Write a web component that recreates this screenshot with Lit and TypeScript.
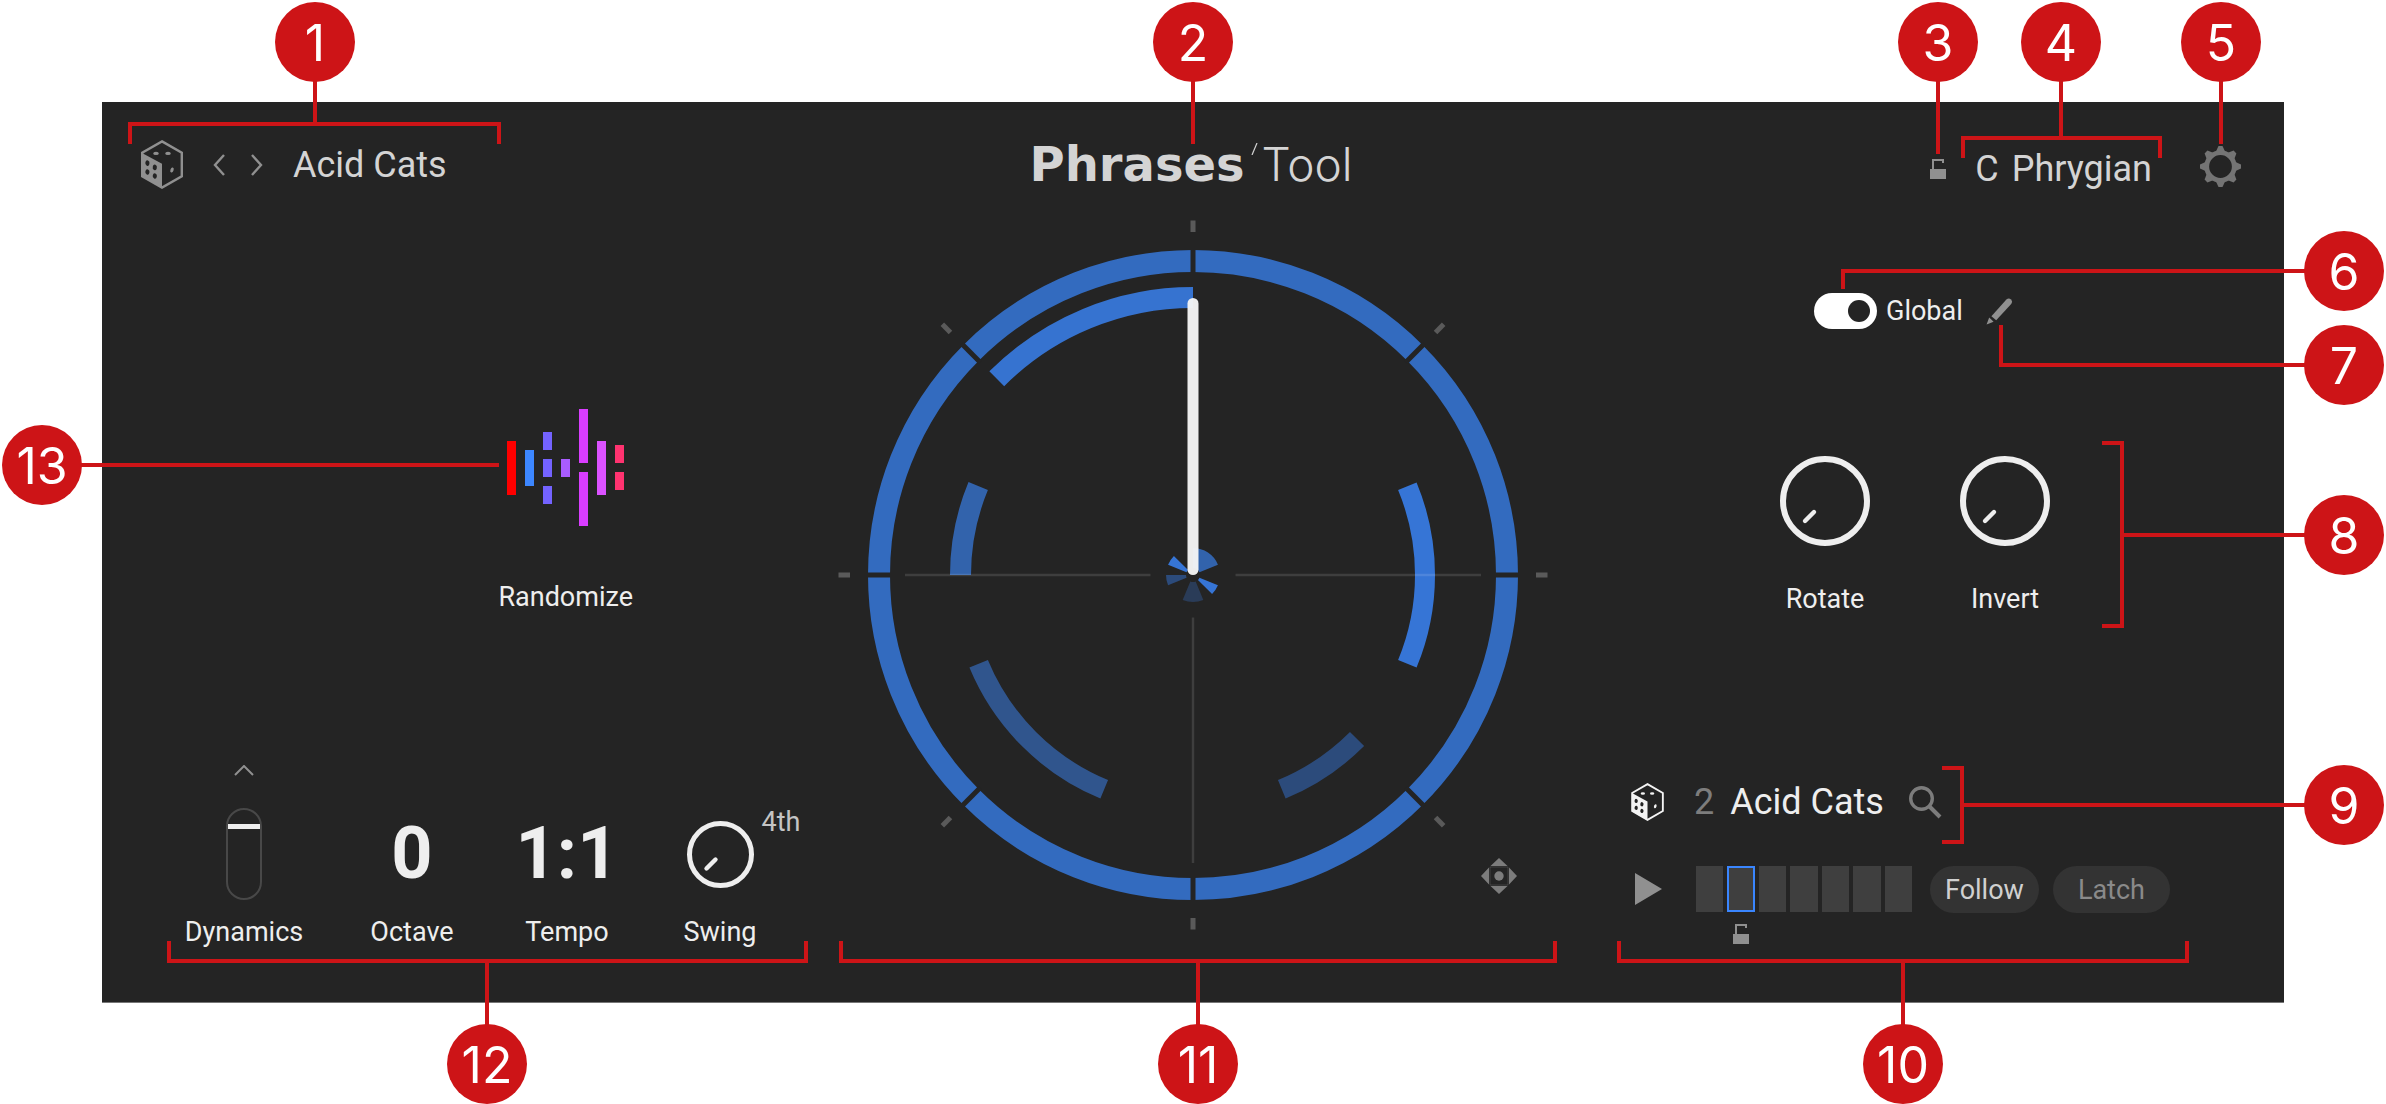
import { LitElement, html, css, svg } from "lit";
import { customElement, property, state } from "lit/decorators.js";
import { classMap } from "lit/directives/class-map.js";

/** Point on a circle; the angle is in degrees, clockwise from twelve o'clock. */
const polar = (angle: number, radius: number): string => {
  const rad = (angle * Math.PI) / 180;
  return `${(Math.sin(rad) * radius).toFixed(2)} ${(-Math.cos(rad) * radius).toFixed(2)}`;
};

/** Ring segment between two angles and two radii. */
const segment = (from: number, to: number, inner: number, outer: number): string =>
  `M${polar(from, outer)}A${outer} ${outer} 0 0 1 ${polar(to, outer)}` +
  `L${polar(to, inner)}A${inner} ${inner} 0 0 0 ${polar(from, inner)}Z`;

const EIGHTHS = [0, 45, 90, 135, 180, 225, 270, 315];

const NOTES = [
  { from: 315, to: 360, inner: 267, outer: 288, color: "#3673d0" },
  { from: 67.5, to: 112.5, inner: 222, outer: 242, color: "#3675d6" },
  { from: 135, to: 157.5, inner: 222, outer: 242, color: "#2c4b7b" },
  { from: 202.5, to: 247.5, inner: 222, outer: 242, color: "#30558d" },
  { from: 270, to: 292.5, inner: 222, outer: 243, color: "#3263ac" },
  { from: 0, to: 67.5, inner: 7, outer: 27, color: "#3263ac" },
  { from: 112.5, to: 135, inner: 7, outer: 27, color: "#3675d6" },
  { from: 157.5, to: 202.5, inner: 7, outer: 27, color: "#2a3c58" },
  { from: 247.5, to: 270, inner: 7, outer: 27, color: "#2c4b7b" },
  { from: 292.5, to: 315, inner: 7, outer: 27, color: "#3675d6" },
];

const RANDOM_BARS: [number, number, number, string][] = [
  [0, 32, 54, "#ff0000"],
  [18, 41, 36, "#3d87ff"],
  [36, 23, 18, "#7463ff"],
  [36, 50, 18, "#7463ff"],
  [36, 77, 18, "#7463ff"],
  [54, 50, 18, "#a95cff"],
  [72, 0, 54, "#d93dff"],
  [72, 63, 54, "#d93dff"],
  [90, 32, 54, "#db52ff"],
  [108, 36, 18, "#ff3370"],
  [108, 63, 18, "#ff3370"],
];

interface Callout {
  n: number;
  x: number;
  y: number;
  line: string;
}

/** Callouts are grouped by the edge of the window that they keep to. */
const LEFT_CALLOUTS: Callout[] = [
  { n: 1, x: 315, y: 42, line: "M315 42V124M130 144V124H499V144" },
  { n: 12, x: 487, y: 1064, line: "M487 1064V961M169 941V961H806V941" },
  { n: 13, x: 42, y: 465, line: "M42 465H499" },
];
const CENTER_CALLOUTS: Callout[] = [
  { n: 2, x: 0, y: 42, line: "M0 42V144" },
  { n: 11, x: 5, y: 1064, line: "M5 1064V961M-352 941V961H362V941" },
];
const RIGHT_CALLOUTS: Callout[] = [
  { n: 3, x: 352, y: 42, line: "M352 42V154" },
  { n: 4, x: 475, y: 42, line: "M475 42V138M377 158V138H574V158" },
  { n: 5, x: 635, y: 42, line: "M635 42V144" },
  { n: 6, x: 758, y: 271, line: "M758 271H257V289" },
  { n: 7, x: 758, y: 365, line: "M758 365H415V325" },
  { n: 8, x: 758, y: 535, line: "M758 535H536M516 443H536V626H516" },
  { n: 9, x: 758, y: 805, line: "M758 805H376M356 768H376V842H356" },
  { n: 10, x: 317, y: 1064, line: "M317 1064V961M33 941V961H601V941" },
];

const diceIcon = (width: number, height: number) => html`
  <svg width=${width} height=${height} viewBox="0 0 42 49" aria-hidden="true">
    <path
      d="M21 1.4L40.8 12.8V36.2L21 47.6L1.2 36.2V12.8Z"
      fill="none" stroke="currentColor" stroke-width="2.4"
    />
    <path
      fill="currentColor" fill-rule="evenodd"
      d="M1 13L21 23.8V48L1 36.5Z
         M4.4 22.3a2 2.6 0 1 0 4 1.6a2 2.6 0 1 0 -4 -1.6Z
         M11.8 26.6a2 2.6 0 1 0 4 1.6a2 2.6 0 1 0 -4 -1.6Z
         M4.4 31.2a2 2.6 0 1 0 4 1.6a2 2.6 0 1 0 -4 -1.6Z
         M11.8 35.2a2 2.6 0 1 0 4 1.6a2 2.6 0 1 0 -4 -1.6Z"
    />
    <g fill="currentColor">
      <ellipse cx="15" cy="13.4" rx="2.8" ry="1.6" />
      <ellipse cx="27" cy="13.4" rx="2.8" ry="1.6" />
      <ellipse cx="31" cy="30" rx="1.6" ry="2.6" transform="rotate(20 31 30)" />
    </g>
  </svg>
`;

const lockIcon = () => html`
  <svg width="16" height="20" viewBox="0 0 16 20" aria-hidden="true">
    <path d="M3 11V1H13V4" fill="none" stroke="currentColor" stroke-width="2" />
    <rect y="10" width="16" height="10" fill="currentColor" />
  </svg>
`;

@customElement("knob-control")
export class KnobControl extends LitElement {
  @property() label = "";
  @property({ type: Number }) size = 90;
  @property({ type: Number }) value = 0;

  static styles = css`
    :host {
      display: block;
      position: relative;
    }
    svg {
      display: block;
    }
    .range {
      position: absolute;
      inset: 0;
      width: 100%;
      height: 100%;
      margin: 0;
      opacity: 0;
      cursor: pointer;
    }
  `;

  render() {
    const s = this.size;
    const big = s > 80;
    const stroke = big ? 6 : 5;
    const near = big ? 11 : 5;
    const far = big ? 20 : 14;
    return html`
      <svg width=${s} height=${s} viewBox="${-s / 2} ${-s / 2} ${s} ${s}" aria-hidden="true">
        <circle r=${(s - stroke) / 2} fill="none" stroke="#eee" stroke-width=${stroke} />
        <path
          d="M${-near} ${near}L${-far} ${far}"
          transform="rotate(${this.value * 2.7})"
          stroke="#eee" stroke-width="4.4" stroke-linecap="round"
        />
      </svg>
      <input
        class="range" type="range" min="0" max="100" aria-label=${this.label}
        .value=${String(this.value)}
        @input=${(e: Event) => (this.value = Number((e.target as HTMLInputElement).value))}
      />
    `;
  }
}

@customElement("phrase-dial")
export class PhraseDial extends LitElement {
  static styles = css`
    :host {
      display: block;
      position: relative;
    }
    .dial {
      display: block;
      width: 100%;
      height: auto;
    }
    .recenter {
      position: absolute;
      right: 36px;
      bottom: 41px;
      padding: 0;
      border: 0;
      background: none;
      line-height: 0;
      cursor: pointer;
    }
  `;

  render() {
    return html`
      <svg class="dial" viewBox="-360 -360 720 720" role="img" aria-label="Phrase">
        <circle r="314" fill="none" stroke="#336bbf" stroke-width="22" />
        ${EIGHTHS.map(
          (a) => svg`
            <g transform="rotate(${a})">
              <rect x="-2.5" y="-327" width="5" height="26" fill="#242424" />
              <rect x="-2.5" y="-354.5" width="5" height="11.5" fill="#5a5a5a" />
            </g>`
        )}
        ${NOTES.map((n) => svg`<path d=${segment(n.from, n.to, n.inner, n.outer)} fill=${n.color} />`)}
        <path
          d="M-288 0H-42.5M42.5 0H288M0 42.5V288"
          stroke="#fff" stroke-opacity="0.12" stroke-width="2.4"
        />
        <rect x="-5.5" y="-277" width="11" height="277" rx="5.5" fill="#f4f4f4" fill-opacity="0.97" />
      </svg>
      <button class="recenter" aria-label="Recenter">
        <svg width="36" height="36" viewBox="-18 -18 36 36" fill="#7c7c7c" aria-hidden="true">
          <path d="M0 -18L8.5 -10H-8.5ZM0 18L8.5 10H-8.5ZM-18 0L-10 -8.5V8.5ZM18 0L10 -8.5V8.5Z" />
          <path
            d="M-9 -9H9V9H-9Z" fill="none" stroke="#7c7c7c" stroke-opacity="0.35" stroke-width="1"
          />
          <circle r="4.7" />
        </svg>
      </button>
    `;
  }
}

@customElement("app-root")
export class AppRoot extends LitElement {
  @state() private cell = 1;
  @state() private global = true;

  static styles = css`
    :host {
      display: block;
      background: #fff;
      font-family: Roboto, "Liberation Sans", sans-serif;
    }
    .frame {
      position: relative;
      padding: 102px 102px 101px;
    }
    .panel {
      box-sizing: border-box;
      padding: 38px 0 54px;
      border-bottom: 1px solid #777;
      background: #242424;
      color: #eee;
    }
    button {
      padding: 0;
      border: 0;
      background: none;
      color: inherit;
      font: inherit;
      cursor: pointer;
    }
    svg {
      display: block;
    }

    .header {
      display: grid;
      grid-template-columns: 1fr auto 1fr;
      align-items: start;
      padding: 0 43px 0 39px;
      font-size: 36px;
      line-height: 48px;
      color: #d4d4d4;
    }
    .preset {
      display: flex;
      align-items: center;
    }
    .preset .dice {
      margin-right: 29px;
      color: #909090;
    }
    .arrows {
      display: flex;
      gap: 24px;
      margin-right: 29px;
      color: #909090;
    }
    .logo {
      display: flex;
      align-items: baseline;
      margin: 0;
      font-weight: 400;
    }
    .logo-name {
      font: 700 48px/48px "DejaVu Sans", sans-serif;
    }
    .logo-slash {
      align-self: flex-start;
      margin: 3px 4px 0 6px;
    }
    .logo-kind {
      font: 300 46px/48px Inter, sans-serif;
    }
    .scale {
      display: flex;
      justify-content: flex-end;
      align-items: center;
      padding-top: 5px;
    }
    .scale .lock {
      margin-right: 29px;
      color: #909090;
    }
    .scale .mode {
      margin: 0 48px 0 13px;
    }
    .scale .gear {
      margin-bottom: 5px;
      color: #747474;
    }

    .main {
      display: grid;
      grid-template-columns: minmax(0, 1fr) minmax(0, 720px) minmax(0, 1fr);
      margin-top: 22px;
      font-size: 27px;
      line-height: 32px;
    }
    .dial {
      align-self: start;
      margin-bottom: 13px;
    }
    .side {
      display: flex;
      flex-direction: column;
    }
    .randomize {
      display: flex;
      flex-direction: column;
      align-items: center;
      gap: 54px;
      align-self: flex-end;
      margin: 194px 200px 0 0;
    }
    .modifiers {
      display: grid;
      grid-template-columns: 176px 160px 150px 156px;
      align-items: end;
      margin-top: auto;
      padding-left: 54px;
    }
    .modifier {
      display: flex;
      flex-direction: column;
      align-items: center;
    }
    .more {
      margin-bottom: 32px;
      color: #909090;
    }
    .value {
      display: flex;
      align-items: center;
      height: 92px;
      margin-bottom: 16px;
      font-size: 72px;
      font-weight: 700;
      line-height: 92px;
    }
    .swing {
      position: relative;
    }
    .division {
      position: absolute;
      top: -15px;
      left: 75px;
      font-size: 27px;
      font-weight: 400;
      line-height: 32px;
      color: #c4c4c4;
    }
    .fader {
      appearance: none;
      box-sizing: border-box;
      writing-mode: vertical-lr;
      direction: rtl;
      width: 36px;
      height: 92px;
      margin: 0;
      border: 2px solid #484848;
      border-radius: 18px;
      background: none;
      cursor: pointer;
    }
    .fader::-webkit-slider-thumb {
      appearance: none;
      width: 32px;
      height: 5px;
      border: 0;
      border-radius: 0;
      background: #eee;
    }

    .global {
      display: flex;
      align-items: center;
      margin: 78px 0 0 261px;
    }
    .global label {
      display: flex;
      align-items: center;
      gap: 9px;
      margin-right: 23px;
      cursor: pointer;
    }
    .switch {
      appearance: none;
      display: flex;
      align-items: center;
      box-sizing: border-box;
      width: 63px;
      height: 36px;
      margin: 0;
      padding: 0 7px;
      border-radius: 18px;
      background: #fff;
      cursor: pointer;
    }
    .switch::before {
      content: "";
      width: 22px;
      height: 22px;
      border-radius: 50%;
      background: #242424;
    }
    .switch:checked {
      justify-content: flex-end;
    }
    .switch:not(:checked) {
      background: #8c8c8c;
    }
    .pencil {
      color: #909090;
    }
    .knobs {
      display: flex;
      gap: 90px;
      margin: 127px 0 0 227px;
    }
    .knob {
      display: flex;
      flex-direction: column;
      align-items: center;
      gap: 37px;
      width: 90px;
    }

    .phrase {
      display: flex;
      align-items: center;
      margin: auto 0 0 78px;
      font-size: 36px;
      line-height: 48px;
    }
    .phrase .dice {
      width: 63px;
      color: #f4f4f4;
    }
    .phrase .slot {
      margin-right: 16px;
      color: #7d7d7d;
    }
    .phrase .search {
      margin-left: 25px;
      color: #7c7c7c;
    }
    .transport {
      display: flex;
      align-items: flex-start;
      margin: 40px 0 4px 78px;
    }
    .play {
      width: 61px;
      padding: 7px 0 7px 4px;
      box-sizing: border-box;
      color: #909090;
    }
    .cells {
      display: grid;
      grid-template-columns: repeat(7, 1fr);
      column-gap: 4px;
      row-gap: 12px;
      width: 216px;
      margin: 0 18px 0 4px;
    }
    .cell {
      box-sizing: border-box;
      height: 46px;
      background: #3f3f3f;
    }
    .cell.on {
      border: 2px solid #3a86ff;
    }
    .cells .lock {
      grid-row: 2;
      justify-self: center;
      color: #909090;
    }
    .pill {
      height: 47px;
      margin-right: 14px;
      padding: 0 15px;
      border-radius: 24px;
      background: #333;
      color: #d0d0d0;
    }
    .pill.off {
      padding: 0 25px;
      color: #8a8a8a;
    }

    .callouts {
      position: absolute;
      top: 0;
      width: 800px;
      height: 100%;
      overflow: visible;
      pointer-events: none;
    }
    .callouts.left {
      left: 0;
    }
    .callouts.center {
      left: 50%;
    }
    .callouts.right {
      right: 0;
    }
    .callouts path {
      fill: none;
      stroke: #cd1417;
      stroke-width: 4;
    }
    .callouts circle {
      fill: #cd1417;
    }
    .callouts text {
      fill: #fff;
      font: 400 50px Inter, sans-serif;
      text-anchor: middle;
    }
  `;

  private callouts(side: string, items: Callout[]) {
    return html`
      <svg class="callouts ${side}">
        ${items.map(
          (c) => svg`
            <path d=${c.line} />
            <circle cx=${c.x} cy=${c.y} r="40" />
            <text x=${c.x} y=${c.y + 19}>${c.n}</text>`
        )}
      </svg>
    `;
  }

  private header() {
    return html`
      <header class="header">
        <div class="preset">
          <button class="dice" aria-label="Randomize preset">${diceIcon(42, 49)}</button>
          <div class="arrows">
            <button aria-label="Previous">
              <svg width="14" height="22" viewBox="0 0 14 22" aria-hidden="true">
                <path d="M12 1L3 11L12 21" fill="none" stroke="currentColor" stroke-width="2.4" />
              </svg>
            </button>
            <button aria-label="Next">
              <svg width="14" height="22" viewBox="0 0 14 22" aria-hidden="true">
                <path d="M2 1L11 11L2 21" fill="none" stroke="currentColor" stroke-width="2.4" />
              </svg>
            </button>
          </div>
          <button>Acid Cats</button>
        </div>
        <h1 class="logo">
          <span class="logo-name">Phrases</span>
          <svg class="logo-slash" width="7" height="12" viewBox="0 0 7 12" aria-hidden="true">
            <path d="M1 12L6 0" stroke="currentColor" stroke-width="1.2" />
          </svg>
          <span class="logo-kind">Tool</span>
        </h1>
        <div class="scale">
          <button class="lock" aria-label="Lock scale">${lockIcon()}</button>
          <button>C</button>
          <button class="mode">Phrygian</button>
          <button class="gear" aria-label="Settings">
            <svg width="41" height="41" viewBox="-20.5 -20.5 41 41" aria-hidden="true">
              <circle r="13.8" fill="none" stroke="currentColor" stroke-width="4.8" />
              ${EIGHTHS.map(
                (a) => svg`<path
                  d="M-4.5 -15L-2 -20.5H2L4.5 -15Z" fill="currentColor" transform="rotate(${a})" />`
              )}
            </svg>
          </button>
        </div>
      </header>
    `;
  }

  private leftSide() {
    return html`
      <section class="side">
        <button class="randomize">
          <svg width="117" height="118" viewBox="0 0 117 118" aria-hidden="true">
            ${RANDOM_BARS.map(
              ([x, y, h, color]) => svg`<rect x=${x} y=${y} width="9" height=${h} fill=${color} />`
            )}
          </svg>
          Randomize
        </button>
        <div class="modifiers">
          <div class="modifier">
            <button class="more" aria-label="More dynamics">
              <svg width="20" height="11" viewBox="0 0 20 11" aria-hidden="true">
                <path d="M1 10L10 1L19 10" fill="none" stroke="currentColor" stroke-width="2" />
              </svg>
            </button>
            <div class="value">
              <input class="fader" id="dynamics" type="range" min="0" max="100" value="83" />
            </div>
            <label for="dynamics">Dynamics</label>
          </div>
          <div class="modifier">
            <button class="value" aria-labelledby="octave">0</button>
            <span id="octave">Octave</span>
          </div>
          <div class="modifier">
            <button class="value" aria-labelledby="tempo">1:1</button>
            <span id="tempo">Tempo</span>
          </div>
          <div class="modifier">
            <div class="value">
              <div class="swing">
                <knob-control label="Swing" size="67"></knob-control>
                <button class="division">4th</button>
              </div>
            </div>
            <span>Swing</span>
          </div>
        </div>
      </section>
    `;
  }

  private rightSide() {
    return html`
      <section class="side">
        <div class="global">
          <label>
            <input
              class="switch" type="checkbox" .checked=${this.global}
              @change=${(e: Event) => (this.global = (e.target as HTMLInputElement).checked)}
            />
            Global
          </label>
          <button class="pencil" aria-label="Edit">
            <svg width="27" height="27" viewBox="0 0 27 27" fill="currentColor" aria-hidden="true">
              <path d="M5.4 18.2L20.4 1.6Q22.6 -0.4 25 1.4Q27 3.6 25.2 6L10.2 22.2Z" />
              <path d="M3.2 19.6L7.6 23.8L0.6 26.6Z" />
            </svg>
          </button>
        </div>
        <div class="knobs">
          <div class="knob"><knob-control label="Rotate"></knob-control><span>Rotate</span></div>
          <div class="knob"><knob-control label="Invert"></knob-control><span>Invert</span></div>
        </div>
        <div class="phrase">
          <button class="dice" aria-label="Randomize phrase">${diceIcon(33, 38)}</button>
          <span class="slot">2</span>
          <button>Acid Cats</button>
          <button class="search" aria-label="Search">
            <svg width="33" height="33" viewBox="0 0 33 33" fill="none" aria-hidden="true">
              <circle cx="12.5" cy="12.5" r="10.8" stroke="currentColor" stroke-width="3.4" />
              <path d="M20 20L31 31" stroke="currentColor" stroke-width="4" />
            </svg>
          </button>
        </div>
        <div class="transport">
          <button class="play" aria-label="Play">
            <svg width="27" height="32" viewBox="0 0 27 32" fill="currentColor" aria-hidden="true">
              <path d="M0 0L27 16L0 32Z" />
            </svg>
          </button>
          <div class="cells">
            ${[0, 1, 2, 3, 4, 5, 6].map(
              (i) => html`
                <button
                  class=${classMap({ cell: true, on: i === this.cell })}
                  aria-label="Phrase ${i + 1}"
                  @click=${() => (this.cell = i)}
                ></button>
              `
            )}
            <button class="lock" aria-label="Lock phrase" style="grid-column: ${this.cell + 1}">
              ${lockIcon()}
            </button>
          </div>
          <button class="pill">Follow</button>
          <button class="pill off">Latch</button>
        </div>
      </section>
    `;
  }

  render() {
    return html`
      <div class="frame">
        <div class="panel">
          ${this.header()}
          <main class="main">
            ${this.leftSide()}
            <phrase-dial class="dial"></phrase-dial>
            ${this.rightSide()}
          </main>
        </div>
        ${this.callouts("left", LEFT_CALLOUTS)}
        ${this.callouts("center", CENTER_CALLOUTS)}
        ${this.callouts("right", RIGHT_CALLOUTS)}
      </div>
    `;
  }
}
